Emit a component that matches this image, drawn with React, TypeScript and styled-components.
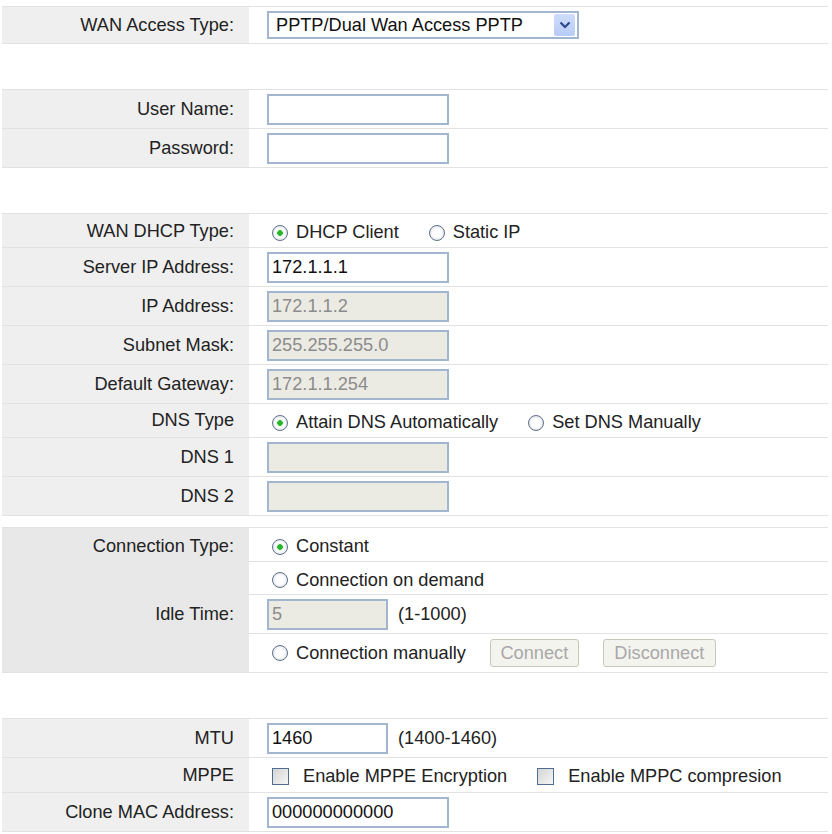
import React from 'react'
import styled, { createGlobalStyle } from 'styled-components'

const GlobalStyle = createGlobalStyle`
  body {
    margin: 0;
    background: #fff;
    font-family: "Liberation Sans", Arial, sans-serif;
    font-size: 18.2px;
    color: #222;
  }
`

const LINE = '#e2e2e2'

const App = () => {
  return (
    <>
      <GlobalStyle />
      <Page>
        <Section $gap={0}>
          <Row $h={37}>
            <Label>WAN Access Type:</Label>
            <Value>
              <Select>
                <span>PPTP/Dual Wan Access PPTP</span>
                <Arrow>
                  <svg width="12" height="8" viewBox="0 0 12 8">
                    <path d="M1.5 1.5 L6 6 L10.5 1.5" fill="none" stroke="#2b4a8a" strokeWidth="2.2" />
                  </svg>
                </Arrow>
              </Select>
            </Value>
          </Row>
        </Section>

        <Section $gap={45}>
          <Row $h={39}>
            <Label>User Name:</Label>
            <Value><Input /></Value>
          </Row>
          <Row $h={39}>
            <Label>Password:</Label>
            <Value><Input /></Value>
          </Row>
        </Section>

        <Section $gap={45}>
          <Row $h={34}>
            <Label $drop={2}>WAN DHCP Type:</Label>
            <Value $drop={4}>
              <Choice><Radio $on />DHCP Client</Choice>
              <Choice><Radio />Static IP</Choice>
            </Value>
          </Row>
          <Row $h={39}>
            <Label>Server IP Address:</Label>
            <Value><Input>172.1.1.1</Input></Value>
          </Row>
          <Row $h={39}>
            <Label>IP Address:</Label>
            <Value><Input $off>172.1.1.2</Input></Value>
          </Row>
          <Row $h={39}>
            <Label>Subnet Mask:</Label>
            <Value><Input $off>255.255.255.0</Input></Value>
          </Row>
          <Row $h={39}>
            <Label>Default Gateway:</Label>
            <Value><Input $off>172.1.1.254</Input></Value>
          </Row>
          <Row $h={34}>
            <Label>DNS Type</Label>
            <Value $drop={4}>
              <Choice><Radio $on />Attain DNS Automatically</Choice>
              <Choice><Radio />Set DNS Manually</Choice>
            </Value>
          </Row>
          <Row $h={39}>
            <Label>DNS 1</Label>
            <Value><Input $off /></Value>
          </Row>
          <Row $h={39}>
            <Label>DNS 2</Label>
            <Value><Input $off /></Value>
          </Row>
        </Section>

        <Section $gap={11}>
          <Row $h={34}>
            <Label $merged $drop={3}>Connection Type:</Label>
            <Value $drop={4}><Choice><Radio $on />Constant</Choice></Value>
          </Row>
          <Row $h={33}>
            <Label $merged />
            <Value $drop={4}><Choice><Radio />Connection on demand</Choice></Value>
          </Row>
          <Row $h={39}>
            <Label $merged>Idle Time:</Label>
            <Value>
              <Input $off $w={121}>5</Input>
              <Hint>(1-1000)</Hint>
            </Value>
          </Row>
          <Row $h={39}>
            <Label $merged $last />
            <Value>
              <Choice $gap={24}><Radio />Connection manually</Choice>
              <Button $w={89}>Connect</Button>
              <Button $w={113}>Disconnect</Button>
            </Value>
          </Row>
        </Section>

        <Section $gap={45}>
          <Row $h={39}>
            <Label>MTU</Label>
            <Value>
              <Input $w={121}>1460</Input>
              <Hint>(1400-1460)</Hint>
            </Value>
          </Row>
          <Row $h={35}>
            <Label>MPPE</Label>
            <Value $drop={3}>
              <Choice><Check />Enable MPPE Encryption</Choice>
              <Choice><Check />Enable MPPC compresion</Choice>
            </Value>
          </Row>
          <Row $h={39}>
            <Label>Clone MAC Address:</Label>
            <Value><Input>000000000000</Input></Value>
          </Row>
        </Section>
      </Page>
    </>
  )
}

export default App

const Page = styled.div`
  padding: 6px 4px 0 2px;
`
const Section = styled.div<{ $gap: number }>`
  margin-top: ${p => p.$gap}px;
  border-top: 1px solid ${LINE};
`
const Row = styled.div<{ $h: number }>`
  display: grid;
  grid-template-columns: 247px 1fr;
  height: ${p => p.$h}px;
`
const Label = styled.div<{ $merged?: boolean; $last?: boolean; $drop?: number }>`
  box-sizing: border-box;
  display: flex;
  align-items: center;
  justify-content: flex-end;
  padding: ${p => p.$drop ?? 0}px 15px 0 0;
  background: ${p => (p.$merged ? '#e8e8e8' : '#efefef')};
  border-bottom: 1px solid ${p => (p.$merged && !p.$last ? '#e8e8e8' : LINE)};
  white-space: nowrap;
`
const Value = styled.div<{ $drop?: number }>`
  box-sizing: border-box;
  display: flex;
  align-items: center;
  padding: ${p => p.$drop ?? 0}px 0 0 18px;
  border-bottom: 1px solid ${LINE};
  white-space: nowrap;
`
const Select = styled.div`
  box-sizing: border-box;
  width: 312px;
  height: 28px;
  display: flex;
  align-items: center;
  justify-content: space-between;
  padding: 0 2px 0 7px;
  border: 2px solid #a3b6cf;
  background: #fff;
  color: #111;
`
const Arrow = styled.div`
  width: 21px;
  height: 22px;
  display: flex;
  align-items: center;
  justify-content: center;
  border-radius: 2px;
  background: linear-gradient(#cfdcfb, #b8cbf6);
`
const Input = styled.div<{ $off?: boolean; $w?: number }>`
  box-sizing: border-box;
  width: ${p => p.$w ?? 182}px;
  height: 31px;
  display: flex;
  align-items: center;
  padding-left: 3px;
  border: 2px solid #a3b6cf;
  background: ${p => (p.$off ? '#ebebe4' : '#fff')};
  color: ${p => (p.$off ? '#8c8c8c' : '#111')};
`
const Hint = styled.span`
  margin-left: 10px;
`
const Choice = styled.label<{ $gap?: number }>`
  display: flex;
  align-items: center;
  margin-right: ${p => p.$gap ?? 25}px;
`
const Radio = styled.span<{ $on?: boolean }>`
  box-sizing: border-box;
  width: 16px;
  height: 16px;
  margin: 0 8px 0 5px;
  border-radius: 50%;
  border: 1px solid #5f6f86;
  background: ${p =>
    p.$on
      ? 'radial-gradient(circle, #27b52a 0 2.5px, #d6ecd6 3px, #fff 4px, #e8ecf0 7px)'
      : 'radial-gradient(circle, #fff 0 4px, #e6e9ee 7px)'};
`
const Check = styled.span`
  box-sizing: border-box;
  width: 17px;
  height: 17px;
  margin: 0 14px 0 5px;
  border: 1px solid #4f6d92;
  background: linear-gradient(135deg, #d4d4d4, #f6f6f6);
`
const Button = styled.div<{ $w: number }>`
  box-sizing: border-box;
  width: ${p => p.$w}px;
  height: 28px;
  margin-right: 24px;
  display: flex;
  align-items: center;
  justify-content: center;
  border: 1px solid #c9c7ba;
  border-radius: 3px;
  background: #f4f4ef;
  color: #a8a8a8;
`
